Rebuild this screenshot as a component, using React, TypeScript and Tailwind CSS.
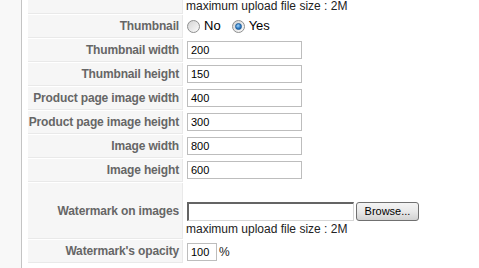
import React from 'react';

const sizeRows = [
  { label: 'Thumbnail width', value: '200' },
  { label: 'Thumbnail height', value: '150' },
  { label: 'Product page image width', value: '400' },
  { label: 'Product page image height', value: '300' },
  { label: 'Image width', value: '800' },
  { label: 'Image height', value: '600' },
];

function Radio({ checked }: { checked?: boolean }) {
  return (
    <span className="w-[13px] h-[13px] rounded-full border border-[#8e8f8f] bg-gradient-to-br from-[#d4d4d4] to-[#fbfbfb] flex items-center justify-center shrink-0">
      {checked && (
        <span className="w-[7px] h-[7px] rounded-full bg-[radial-gradient(circle_at_40%_35%,#9fd4fb,#2a78c2_60%,#17508f)] border border-[#1d5d9b]" />
      )}
    </span>
  );
}

function Key({ children, tall }: { children?: React.ReactNode; tall?: boolean }) {
  return (
    <div
      className={`w-[155px] shrink-0 bg-[#f6f6f6] border-b border-r border-[#e9e9e9] flex items-center justify-end pr-[3px] text-[12px] tracking-[-0.15px] font-bold text-[#666] whitespace-nowrap ${
        tall ? 'h-[56px]' : 'h-[23px]'
      }`}
    >
      {children}
    </div>
  );
}

function TextBox({ value, w = 'w-[115px]' }: { value: string; w?: string }) {
  return (
    <div className={`${w} h-[18px] border border-[#bdbdbd] bg-white flex items-center pl-[3px] text-[11px] text-black`}>
      {value}
    </div>
  );
}

export default function App() {
  return (
    <div className="w-[479px] h-[268px] overflow-hidden bg-white flex font-['Liberation_Sans',Arial,sans-serif]">
      {/* left strip */}
      <div className="w-[22px] h-full bg-[#f8f8f8] border-r border-[#c4c4c4] shrink-0" />

      <div className="ml-[6px] flex flex-col gap-[1px] mt-[-9px]">
        {/* tail of previous upload row */}
        <div className="flex gap-[1px]">
          <Key />
          <div className="flex items-end pl-[2px] pb-[1px] h-[23px]">
            <span className="text-[12px] leading-[14px] text-[#222]">maximum upload file size : 2M</span>
          </div>
        </div>

        <div className="flex gap-[1px]">
          <Key>Thumbnail</Key>
          <div className="flex items-center pl-[3px] h-[22px] text-[13px] text-black">
            <Radio />
            <span className="ml-[4px]">No</span>
            <span className="ml-[11px]">
              <Radio checked />
            </span>
            <span className="ml-[4px]">Yes</span>
          </div>
        </div>

        {sizeRows.map((r) => (
          <div key={r.label} className="flex gap-[1px]">
            <Key>{r.label}</Key>
            <div className="flex items-center pl-[3px] h-[22px]">
              <TextBox value={r.value} />
            </div>
          </div>
        ))}

        <div className="flex gap-[1px]">
          <Key tall>Watermark on images</Key>
          <div className="flex flex-col pl-[3px] pt-[19px]">
            <div className="flex items-center">
              <div className="w-[167px] h-[19px] bg-white border-t-2 border-l-2 border-[#646464] border-r border-b border-r-[#d6d6d6] border-b-[#d6d6d6]" />
              <div className="ml-[2px] w-[63px] h-[19px] rounded-[3px] border border-[#707070] bg-gradient-to-b from-[#f4f4f4] via-[#e8e8e8] to-[#d2d2d2] flex items-center justify-center text-[11px] text-black">
                Browse...
              </div>
            </div>
            <span className="text-[12px] leading-[14px] text-[#222] mt-[1px] -ml-[1px]">maximum upload file size : 2M</span>
          </div>
        </div>

        <div className="flex gap-[1px]">
          <Key>Watermark's opacity</Key>
          <div className="flex items-center pl-[3px] h-[22px] pt-[2px]">
            <TextBox value="100" w="w-[30px]" />
            <span className="ml-[2px] text-[12px] text-[#222]">%</span>
          </div>
        </div>
      </div>
    </div>
  );
}
